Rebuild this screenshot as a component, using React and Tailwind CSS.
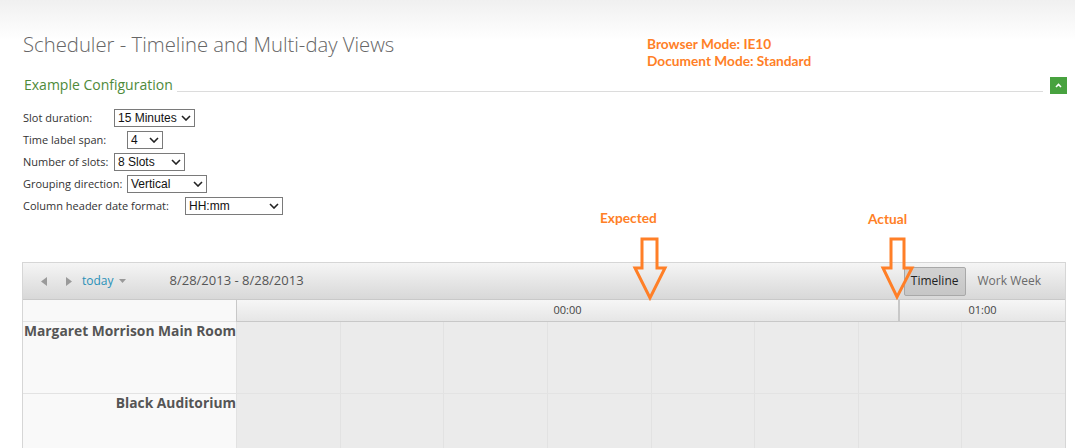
import React from 'react'

const ui = "font-['Segoe_UI','Open_Sans',sans-serif]"
const note = "font-['Lato','Open_Sans',sans-serif] font-bold text-[13.7px] text-[#ff7f27] leading-[17px]"

const Chevron = () => (
    <svg width="10" height="6" viewBox="0 0 10 6" className="shrink-0">
        <polyline points="1,1 5,5 9,1" fill="none" stroke="#222" strokeWidth="1.6" />
    </svg>
)

const Select = ({ value, className }) => (
    <div className={`flex items-center justify-between h-[18px] border border-[#7a7a7a] bg-white pl-[3px] pr-[3px] font-['Liberation_Sans',sans-serif] text-[12px] text-[#111] leading-none whitespace-nowrap ${className}`}>
        <span>{value}</span>
        <Chevron />
    </div>
)

const ConfigRow = ({ label, labelClass, children }) => (
    <div className="flex items-center h-[22px]">
        <span className={`text-[11px] text-[#333] ${labelClass}`}>{label}</span>
        {children}
    </div>
)

const GridRow = ({ name }) => (
    <div className="flex h-[72px] border-b border-[#e3e3e3]">
        <div className="w-[213px] shrink-0 bg-[#f9f9f9] text-right text-[13.8px] font-bold text-[#555] leading-[16px] pt-[1px] whitespace-nowrap">
            {name}
        </div>
        <div className="flex-1 grid grid-cols-8 bg-[#ebebeb]">
            {[0, 1, 2, 3, 4, 5, 6, 7].map(i => (
                <div key={i} className="border-l border-[#e2e2e2]" />
            ))}
        </div>
    </div>
)

export default function App() {
    return (
        <div className={`relative w-[1075px] h-[448px] overflow-hidden bg-white ${ui}`}>
            <div className="bg-linear-to-b from-[#f0f0f0] to-white h-[40px] absolute inset-x-0 top-0" />

            <div className="relative pl-[23px] pt-[30px]">
                <h1 className="text-[20.3px] font-light text-[#666] leading-[28px]">Scheduler - Timeline and Multi-day Views</h1>

                <div className="flex items-center h-[18px] mt-[18px] pr-[8px]">
                    <span className="text-[14px] text-[#4e8a3a] leading-none pl-[1px]">Example Configuration</span>
                    <div className="flex-1 self-end mb-[2px] ml-[4px] mr-[7px] border-b border-[#dcdcdc]" />
                    <button className="w-[17px] h-[17px] bg-[#48a23f] flex items-center justify-center">
                        <svg width="7" height="5" viewBox="0 0 7 5">
                            <polyline points="1,4 3.5,1.5 6,4" fill="none" stroke="#fff" strokeWidth="1.6" />
                        </svg>
                    </button>
                </div>

                <div className="mt-[13px]">
                    <ConfigRow label="Slot duration:" labelClass="w-[91px]">
                        <Select value="15 Minutes" className="w-[81px]" />
                    </ConfigRow>
                    <ConfigRow label="Time label span:" labelClass="w-[104px]">
                        <Select value="4" className="w-[36px]" />
                    </ConfigRow>
                    <ConfigRow label="Number of slots:" labelClass="w-[91px]">
                        <Select value="8 Slots" className="w-[71px]" />
                    </ConfigRow>
                    <ConfigRow label="Grouping direction:" labelClass="w-[104px]">
                        <Select value="Vertical" className="w-[80px]" />
                    </ConfigRow>
                    <ConfigRow label="Column header date format:" labelClass="w-[162px]">
                        <Select value="HH:mm" className="w-[98px]" />
                    </ConfigRow>
                </div>
            </div>

            {/* scheduler widget */}
            <div className="relative ml-[22px] mt-[45px] w-[1044px] border-x border-t border-[#d6d6d6]">
                <div className="flex items-center h-[37px] bg-linear-to-b from-[#f5f5f5] to-[#d8d8d8] border-b border-[#c9c9c9]">
                    <div className="flex items-center pl-[18px] gap-[19px]">
                        <svg width="6" height="9" viewBox="0 0 6 9"><polygon points="6,0 6,9 0,4.5" fill="#9a9a9a" /></svg>
                        <svg width="6" height="9" viewBox="0 0 6 9"><polygon points="0,0 0,9 6,4.5" fill="#9a9a9a" /></svg>
                    </div>
                    <span className="ml-[10px] text-[12px] text-[#2a91b8]">today</span>
                    <svg width="7" height="4" viewBox="0 0 7 4" className="ml-[5px]"><polygon points="0,0 7,0 3.5,4" fill="#999" /></svg>
                    <span className="ml-[44px] text-[13px] text-[#555]">8/28/2013 - 8/28/2013</span>
                    <div className="ml-auto flex items-center pr-[24px]">
                        <div className="h-[29px] px-[6px] flex items-center border border-[#a8a8a8] rounded-[2px] bg-linear-to-b from-[#d2d2d2] to-[#c6c6c6] text-[12px] text-[#222]">Timeline</div>
                        <span className="ml-[12px] text-[12px] text-[#6a6a6a]">Work Week</span>
                    </div>
                </div>

                <div className="flex h-[22px]">
                    <div className="w-[213px] shrink-0 bg-[#f9f9f9] border-b border-[#e3e3e3]" />
                    <div className="flex-1 flex bg-linear-to-b from-[#f6f6f6] to-[#e6e6e6] border-b border-[#c8c8c8] text-[11px] text-[#444]">
                        <div className="w-[664px] flex items-center justify-center border-l border-r-2 border-[#c8c8c8]">00:00</div>
                        <div className="flex-1 flex items-center justify-center">01:00</div>
                    </div>
                </div>

                <GridRow name="Margaret Morrison Main Room" />
                <GridRow name="Black Auditorium" />
            </div>

            {/* annotations */}
            <div className={`absolute left-[647px] top-[35px] ${note}`}>
                <div>Browser Mode: IE10</div>
                <div>Document Mode: Standard</div>
            </div>
            <div className={`absolute left-[600px] top-[209px] ${note}`}>Expected</div>
            <div className={`absolute left-[868px] top-[210px] ${note}`}>Actual</div>
            <svg className="absolute inset-0 pointer-events-none" width="1075" height="448">
                <polygon points="642,239 657,239 657,268 665,268 650,298 635,268 642,268" fill="none" stroke="#ff7f27" strokeWidth="3" />
                <polygon points="891,239 904,239 904,268 912,268 897,297 883,268 891,268" fill="none" stroke="#ff7f27" strokeWidth="3" />
            </svg>
        </div>
    )
}
